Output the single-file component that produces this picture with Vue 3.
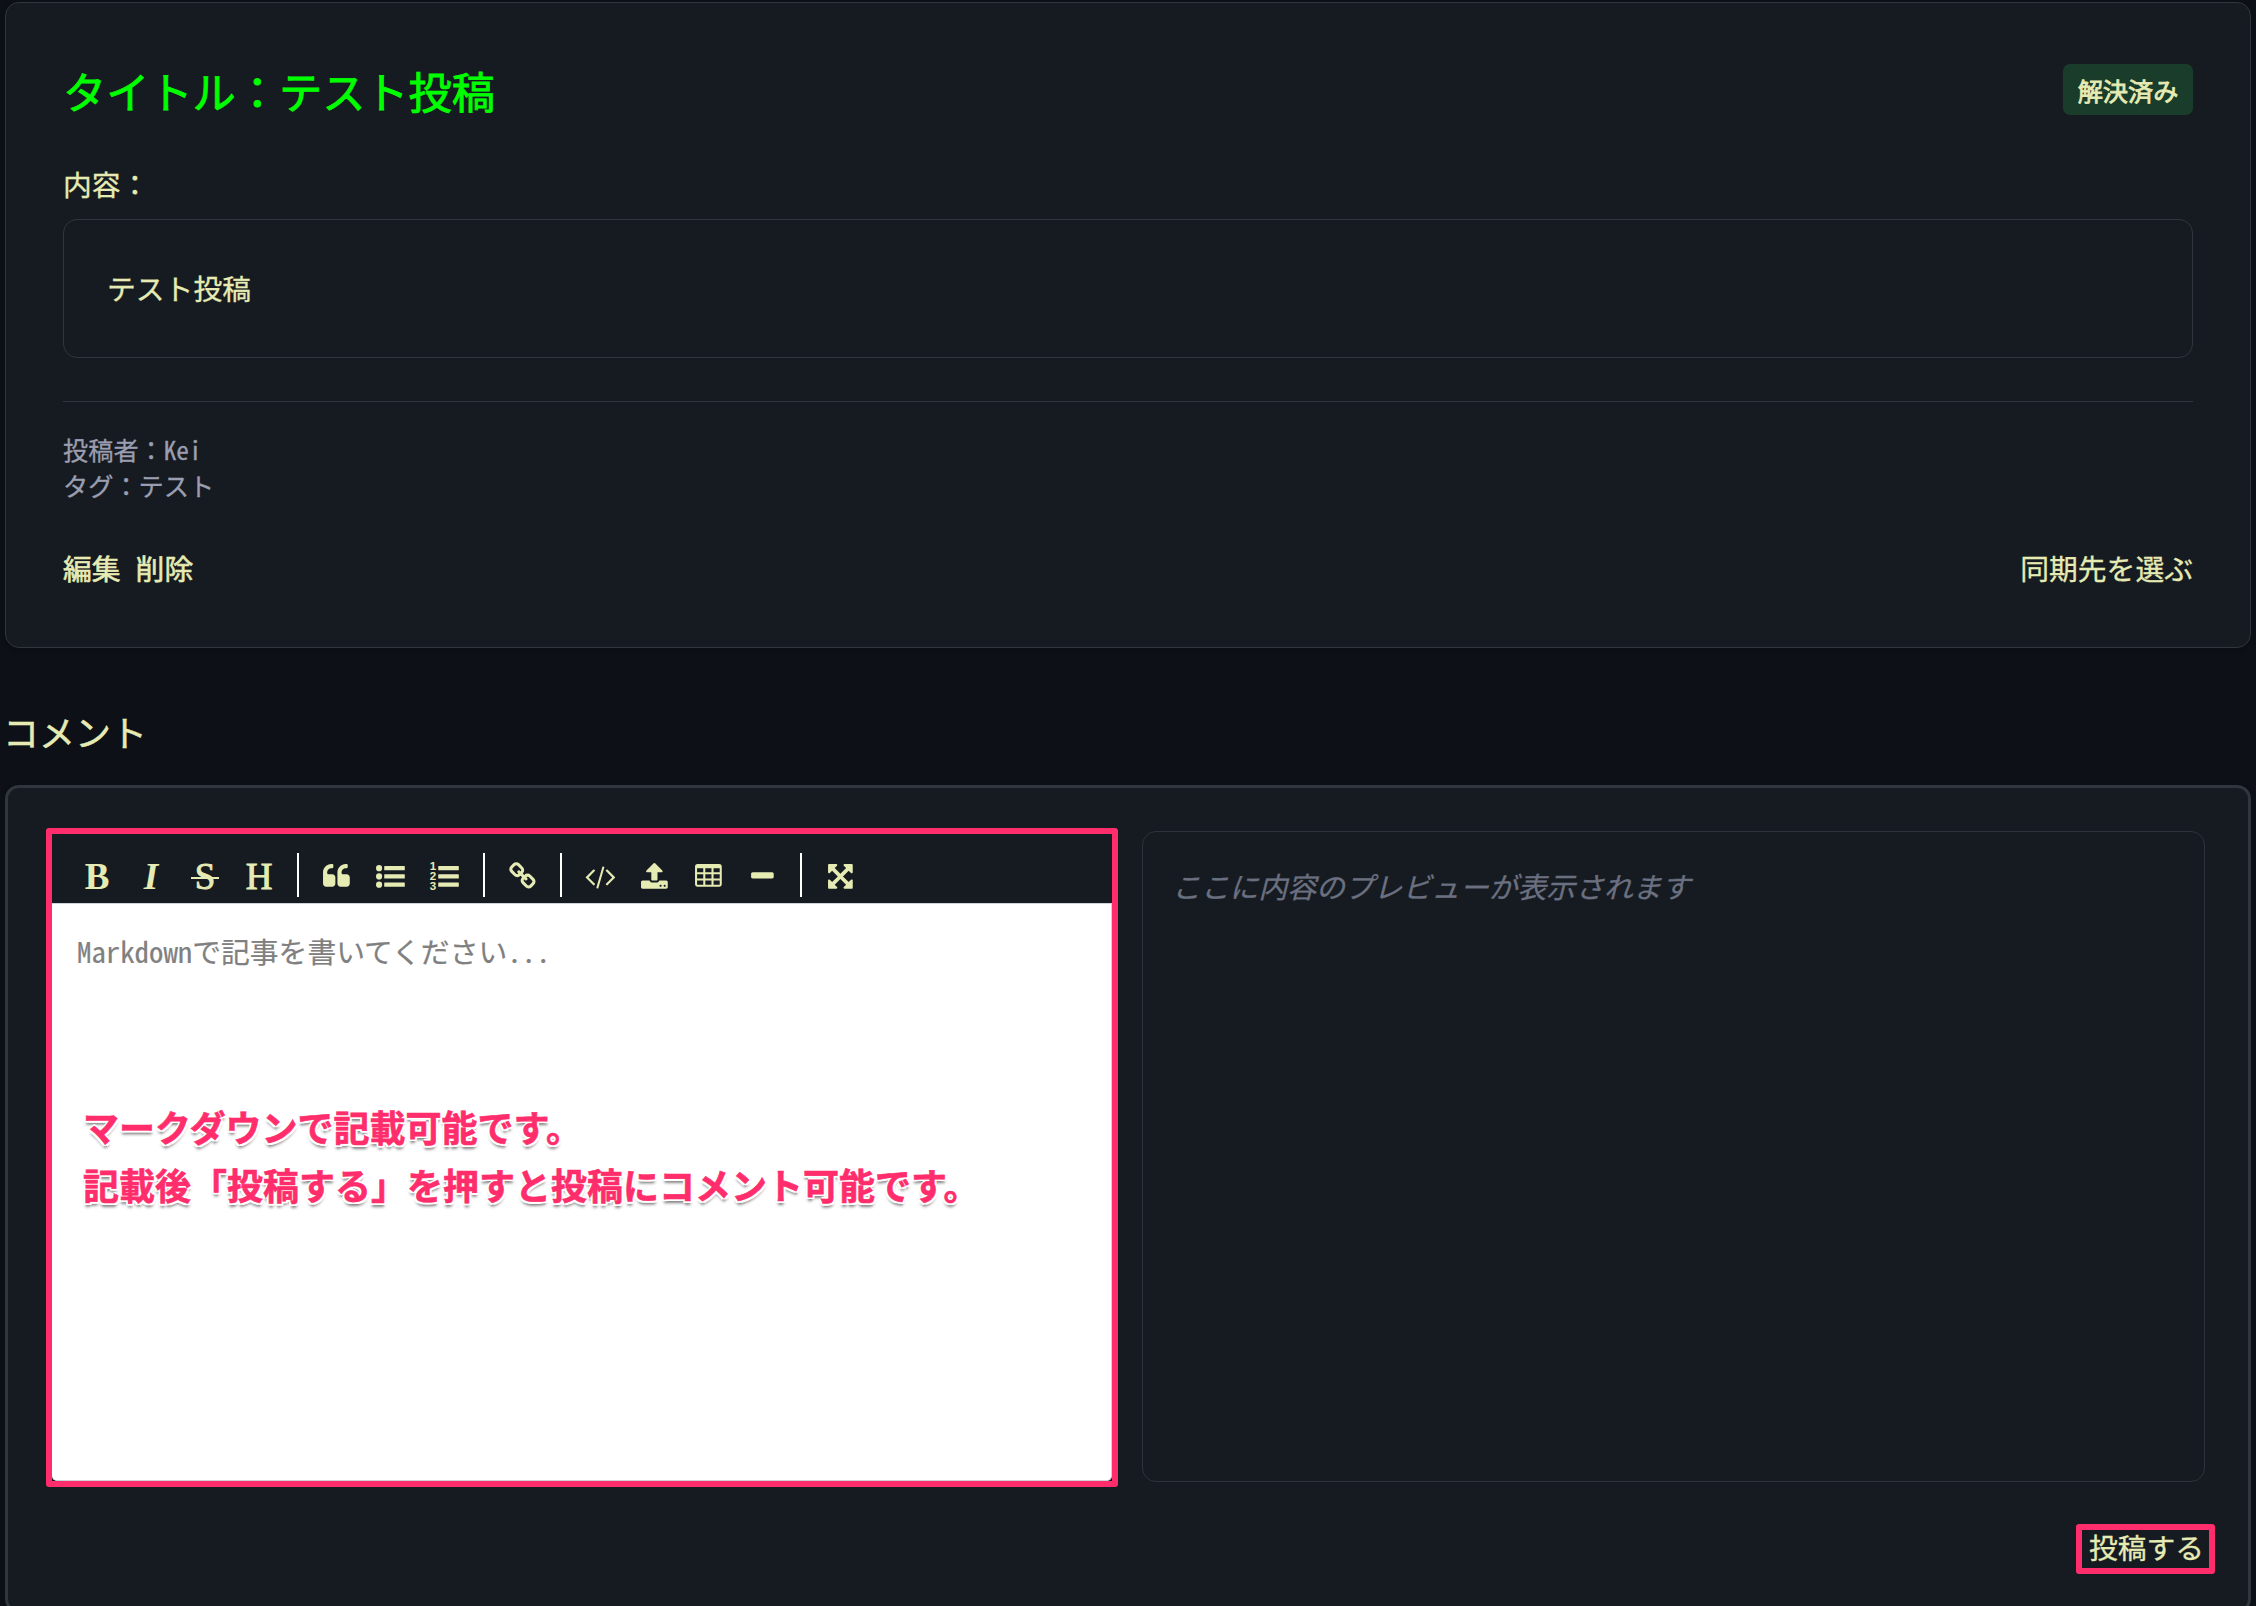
<script setup>
const chain = 'M1520 1216q0-40-28-68l-208-208q-28-28-68-28-42 0-72 32 3 3 19 18.5t21.5 21.5 15 19 13 25.5 3.5 27.5q0 40-28 68t-68 28q-15 0-27.5-3.5t-25.5-13-19-15-21.5-21.5-18.5-19q-33 31-33 73 0 40 28 68l206 207q27 27 68 27 40 0 68-26l147-146q28-28 28-67zm-703-705q0-40-28-68l-206-207q-28-28-68-28-39 0-68 27l-147 146q-28 28-28 67 0 40 28 68l208 208q27 27 68 27 42 0 72-31-3-3-19-18.5t-21.5-21.5-15-19-13-25.5-3.5-27.5q0-40 28-68t68-28q15 0 27.5 3.5t25.5 13 19 15 21.5 21.5 18.5 19q33-31 33-73zm895 705q0 120-85 203l-147 146q-83 83-203 83-121 0-204-85l-206-207q-83-83-83-203 0-123 88-209l-88-88q-86 88-208 88-120 0-204-84l-208-208q-84-84-84-204t85-203l147-146q83-83 203-83 121 0 204 85l206 207q83 83 83 203 0 123-88 209l88 88q86-88 208-88 120 0 204 84l208 208q84 84 84 204z'
const quote = 'M832 960v384q0 80-56 136t-136 56h-384q-80 0-136-56t-56-136v-704q0-104 40.5-198.5t109.5-163.5 163.5-109.5 198.5-40.5h64q26 0 45 19t19 45v128q0 26-19 45t-45 19h-64q-106 0-181 75t-75 181v32q0 40 28 68t68 28h224q80 0 136 56t56 136zm896 0v384q0 80-56 136t-136 56h-384q-80 0-136-56t-56-136v-704q0-104 40.5-198.5t109.5-163.5 163.5-109.5 198.5-40.5h64q26 0 45 19t19 45v128q0 26-19 45t-45 19h-64q-106 0-181 75t-75 181v32q0 40 28 68t68 28h224q80 0 136 56t56 136z'
const code = 'M553 1399l-50 50q-10 10-23 10t-23-10l-466-466q-10-10-10-23t10-23l466-466q10-10 23-10t23 10l50 50q10 10 10 23t-10 23l-393 393 393 393q10 10 10 23t-10 23zm591-1067l-373 1291q-4 13-15.5 19.5t-23.5 2.5l-62-17q-13-4-19.5-15.5t-2.5-24.5l373-1291q4-13 15.5-19.5t23.5-2.5l62 17q13 4 19.5 15.5t2.5 24.5zm657 651l-466 466q-10 10-23 10t-23-10l-50-50q-10-10-10-23t10-23l393-393-393-393q-10-10-10-23t10-23l50-50q10-10 23-10t23 10l466 466q10 10 10 23t-10 23z'
const upload = 'M1344 1472q0-26-19-45t-45-19-45 19-19 45 19 45 45 19 45-19 19-45zm256 0q0-26-19-45t-45-19-45 19-19 45 19 45 45 19 45-19 19-45zm128-224v320q0 40-28 68t-68 28h-1472q-40 0-68-28t-28-68v-320q0-40 28-68t68-28h427q21 56 70.5 92t110.5 36h256q61 0 110.5-36t70.5-92h427q40 0 68 28t28 68zm-325-648q-17 40-59 40h-256v448q0 26-19 45t-45 19h-256q-26 0-45-19t-19-45v-448h-256q-42 0-59-40-17-39 14-69l448-448q18-19 45-19t45 19l448 448q31 30 14 69z'
const table = 'M224 128h1344q160 0 160 160v1088q0 160-160 160h-1344q-160 0-160-160v-1088q0-160 160-160zM192 384h384v256h-384zM704 384h384v256h-384zM1216 384h384v256h-384zM192 768h384v256h-384zM704 768h384v256h-384zM1216 768h384v256h-384zM192 1152h384v256h-384zM704 1152h384v256h-384zM1216 1152h384v256h-384z'
const minus = 'M1600 736v192q0 40-28 68t-68 28h-1216q-40 0-68-28t-28-68v-192q0-40 28-68t68-28h1216q40 0 68 28t28 68z'
const expand = 'M1411 541l-355 355 355 355 144-144q29-31 70-14 39 17 39 59v448q0 26-19 45t-45 19h-448q-42 0-59-40-17-39 14-69l144-144-355-355-355 355 144 144q31 30 14 69-17 40-59 40h-448q-26 0-45-19t-19-45v-448q0-42 40-59 39-17 69 14l144 144 355-355-355-355-144 144q-19 19-45 19-12 0-24-5-40-17-40-59v-448q0-26 19-45t45-19h448q42 0 59 40 17 39-14 69l-144 144 355 355 355-355-144-144q-31-30-14-69 17-40 59-40h448q26 0 45 19t19 45v448q0 42-39 59-13 5-25 5-26 0-45-19z'
const bars = 'M544 256h1216q32 0 32 32v192q0 32-32 32h-1216q-32 0-32-32v-192q0-32 32-32zM544 768h1216q32 0 32 32v192q0 32-32 32h-1216q-32 0-32-32v-192q0-32 32-32zM544 1280h1216q32 0 32 32v192q0 32-32 32h-1216q-32 0-32-32v-192q0-32 32-32z'
const dots = 'M0 384a192 192 0 1 0 384 0a192 192 0 1 0-384 0zM0 896a192 192 0 1 0 384 0a192 192 0 1 0-384 0zM0 1408a192 192 0 1 0 384 0a192 192 0 1 0-384 0z'

const tools = [
  { name: 'bold', text: 'B' },
  { name: 'italic', text: 'I' },
  { name: 'strike', text: 'S' },
  { name: 'heading', text: 'H' },
  { name: 'sep1', sep: true },
  { name: 'quote', path: quote },
  { name: 'ul', path: bars + dots },
  { name: 'ol', path: bars, digits: ['1', '2', '3'] },
  { name: 'sep2', sep: true },
  { name: 'link', path: chain },
  { name: 'sep3', sep: true },
  { name: 'code', path: code },
  { name: 'upload', path: upload },
  { name: 'table', path: table },
  { name: 'hr', path: minus },
  { name: 'sep4', sep: true },
  { name: 'fullscreen', path: expand },
]
</script>

<template>
  <main class="page">
    <section class="card post">
      <header class="post-head">
        <h1>タイトル：テスト投稿</h1>
        <span class="badge">解決済み</span>
      </header>
      <p class="label">内容：</p>
      <div class="body">テスト投稿</div>
      <div class="meta">
        <p>投稿者：<span class="half">Kei</span></p>
        <p>タグ：テスト</p>
      </div>
      <div class="actions">
        <div class="links"><a>編集</a><a>削除</a></div>
        <a>同期先を選ぶ</a>
      </div>
    </section>

    <h2>コメント</h2>

    <section class="card comment">
      <div class="panes">
        <div class="editor">
          <div class="toolbar">
            <template v-for="t in tools" :key="t.name">
              <i v-if="t.sep" class="sep"></i>
              <button v-else :class="['tool', t.name]">
                <span v-if="t.text">{{ t.text }}</span>
                <svg v-else viewBox="0 0 1792 1792">
                  <path :d="t.path" fill-rule="evenodd" />
                  <text v-for="(d, i) in t.digits" :key="d" x="-20" :y="490 + i * 640">{{ d }}</text>
                </svg>
              </button>
            </template>
          </div>
          <div class="input">
            <p class="placeholder half">Markdownで記事を書いてください...</p>
            <p class="note">マークダウンで記載可能です。<br>記載後「投稿する」を押すと投稿にコメント可能です。</p>
          </div>
        </div>
        <div class="preview"><em>ここに内容のプレビューが表示されます</em></div>
      </div>
      <div class="submit-row"><button class="submit">投稿する</button></div>
    </section>
  </main>
</template>

<style>
body {
  background: #0d1117;
}
</style>

<style scoped>
* {
  box-sizing: border-box;
  margin: 0;
}
.page {
  height: 1606px;
  overflow: hidden;
  padding: 2px 5px 0;
  background: #0d1117;
  color: #e6ebb4;
  font: 400 28.8px/40px "Noto Sans CJK JP", sans-serif;
  -webkit-text-stroke: 0.3px currentColor;
}
.half {
  font-feature-settings: "hwid";
}
.card {
  background: #161b22;
  border: 1px solid #30363d;
  border-radius: 14px;
  box-shadow: 0 2px 4px rgba(8, 10, 12, 0.5);
}
.post {
  height: 646px;
  padding: 61px 57px 0;
}
.post-head {
  display: flex;
  justify-content: space-between;
  align-items: flex-start;
  height: 51px;
}
h1 {
  color: #00ff00;
  font-size: 43.2px;
  line-height: 52px;
  font-weight: 400;
  -webkit-text-stroke-width: 0.8px;
}
.badge {
  width: 130px;
  height: 51px;
  border-radius: 7px;
  background: #1a3d2b;
  font-size: 25.2px;
  line-height: 53px;
  text-align: center;
  -webkit-text-stroke-width: 0.8px;
}
.label {
  margin: 49px 0 15px;
}
.body {
  height: 139px;
  padding: 48px 43px;
  border: 1px solid #30363d;
  border-radius: 14px;
}
.meta {
  margin-top: 43px;
  padding-top: 29px;
  border-top: 1px solid #30363d;
  color: #9a9eb0;
  font-size: 25.2px;
  line-height: 36px;
}
.actions {
  display: flex;
  justify-content: space-between;
  margin-top: 45px;
}
.links {
  display: flex;
  gap: 15px;
  -webkit-text-stroke-width: 0.6px;
}
h2 {
  margin: 58px 0 29px -2px;
  font-size: 36px;
  line-height: 50px;
  font-weight: 400;
  -webkit-text-stroke-width: 0.5px;
}
.comment {
  height: 828px;
  padding: 40px 38px 0;
  border-width: 3px;
}
.panes {
  display: flex;
  align-items: flex-start;
  gap: 24px;
}
.editor {
  display: flex;
  flex-direction: column;
  width: 1072px;
  height: 659px;
  border: 6px solid #ff2d6b;
  border-radius: 3px;
  background: #161b22;
}
.toolbar {
  display: flex;
  align-items: center;
  flex: 0 0 69px;
  padding: 14px 18px 0;
}
.tool {
  display: flex;
  align-items: center;
  justify-content: center;
  width: 54px;
  height: 54px;
  padding: 2px 0 0;
  border: 0;
  background: none;
  color: #e6ebb4;
  font: 700 37px/54px "Liberation Serif", serif;
  -webkit-text-stroke-width: 0;
}
.tool svg {
  width: 28.8px;
  height: 28.8px;
  fill: currentColor;
  overflow: visible;
}
.tool text {
  font: 700 720px "Liberation Sans", sans-serif;
}
.italic {
  font-style: italic;
}
.strike,
.heading {
  font-weight: 400;
}
.heading span,
.strike span {
  -webkit-text-stroke: 0.9px currentColor;
}
.strike span {
  padding: 0 4px;
  background: linear-gradient(currentColor, currentColor) 0 27px / 100% 2px no-repeat;
}
.sep {
  width: 2px;
  height: 44px;
  margin: -2px 10.9px 0;
  background: #fff;
}
.input {
  position: relative;
  flex: 1;
  border: 1px solid #ced4da;
  border-width: 1px 1px 1px 0;
  border-radius: 0 0 5px 5px;
  background: #fff;
}
.placeholder {
  padding: 27px 25px;
  color: #808080;
  -webkit-text-stroke-width: 0.2px;
}
.note {
  position: absolute;
  left: 31px;
  top: 193px;
  color: #ff2d6b;
  font-size: 36px;
  line-height: 58px;
  font-weight: 700;
  white-space: nowrap;
  -webkit-text-stroke-width: 0.6px;
  text-shadow: 2px 0 #fff, -2px 0 #fff, 0 2px #fff, 0 -2px #fff, 2px 2px #fff, -2px 2px #fff, 0 4px 3px rgba(0, 0, 0, 0.5);
}
.preview {
  width: 1063px;
  height: 651px;
  margin-top: 3px;
  padding: 34px 29px;
  border: 1px solid #2d333b;
  border-radius: 14px;
  color: #6b7080;
}
.submit-row {
  display: flex;
  justify-content: flex-end;
  margin: 37px -5px 0 0;
}
.submit {
  width: 139px;
  height: 50px;
  padding: 0 0 4px 2px;
  border: 6px solid #ff2d6b;
  border-radius: 3px;
  background: none;
  color: inherit;
  font: inherit;
  line-height: 34px;
}
</style>
